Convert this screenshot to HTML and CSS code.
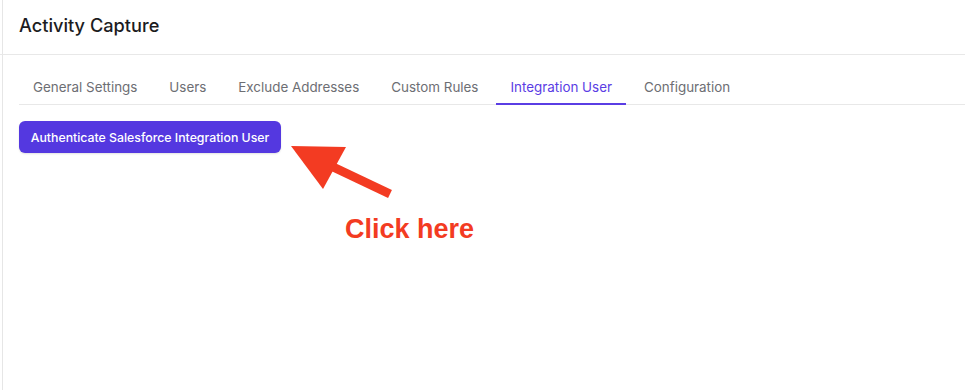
FILE: index.html
```html
<!DOCTYPE html>
<html>
<head>
<meta charset="utf-8">
<link rel="stylesheet" href="styles.css">
</head>
<body>
<div class="page">
  <header class="header">
    <h1 class="title">Activity Capture</h1>
  </header>
  <div class="content">
    <nav class="tabs">
      <div class="tab">General Settings</div>
      <div class="tab">Users</div>
      <div class="tab">Exclude Addresses</div>
      <div class="tab">Custom Rules</div>
      <div class="tab active">Integration User</div>
      <div class="tab">Configuration</div>
    </nav>
    <div class="panel">
      <button class="btn">Authenticate Salesforce Integration User</button>
    </div>
  </div>
  <div class="annotation">
    <svg class="arrow" width="110" height="66" viewBox="0 0 110 66">
      <polygon points="0,11 55,12 32,54" fill="#f33b22"/>
      <line x1="40" y1="31" x2="99" y2="59" stroke="#f33b22" stroke-width="9"/>
    </svg>
    <div class="callout">Click here</div>
  </div>
</div>
</body>
</html>
```
FILE: styles.css
```css
* { box-sizing: border-box; }
html, body { margin: 0; padding: 0; background: #fff; }
body {
  font-family: Inter, "Noto Sans", sans-serif;
  color: #1d1d1f;
  width: 965px;
  height: 390px;
  overflow: hidden;
}
.page {
  position: relative;
  margin-left: 2px;
  border-left: 1px solid #e6e6e6;
  height: 390px;
}
.header {
  margin-left: -3px;
  height: 55px;
  border-bottom: 1px solid #e8e8e8;
  padding: 14px 0 0 19px;
}
.title {
  margin: 0;
  font-size: 18.2px;
  font-weight: 500;
  line-height: 22px;
  color: #1c1c1e;
}
.content {
  padding: 14px 0 0 16px;
}
.tabs {
  display: flex;
  gap: 4px;
  border-bottom: 1px solid #e8e8e8;
}
.tab {
  padding: 10px 14px 7px;
  font-size: 13.4px;
  line-height: 17px;
  color: #6d6e73;
  border-bottom: 2px solid transparent;
  margin-bottom: -1px;
}
.tab.active {
  color: #5a3de4;
  border-bottom-color: #5a3de4;
}
.panel {
  padding-top: 16px;
}
.btn {
  font-family: Inter, "Noto Sans", sans-serif;
  background: #5438e0;
  color: #fff;
  border: none;
  border-radius: 6px;
  height: 32px;
  width: 262px;
  font-size: 12.3px;
  font-weight: 500;
  padding: 0;
  box-shadow: 0 1px 2px rgba(0,0,0,0.12);
}
.annotation {
  position: absolute;
  left: 285px;
  top: 135px;
}
.arrow {
  position: absolute;
  left: 3px;
  top: 0;
}
.callout {
  position: absolute;
  left: 57px;
  top: 79px;
  font-family: "Liberation Sans", Arial, sans-serif;
  font-weight: 700;
  font-size: 27px;
  color: #f33b22;
  white-space: nowrap;
}
```
